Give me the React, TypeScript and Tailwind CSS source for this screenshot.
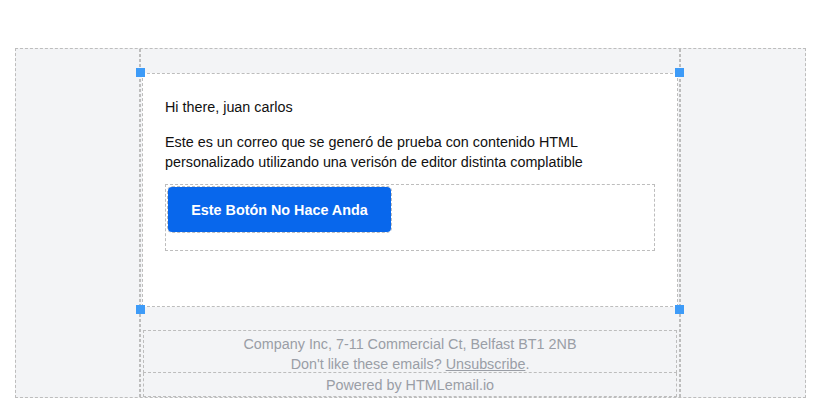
import React from "react";

const dash = "border-dashed border-[#bdbdbd]";

function Handle({ className }: { className: string }) {
  return <div className={`absolute w-[9px] h-[9px] bg-[#3d9bf8] z-10 ${className}`} />;
}

export default function App() {
  return (
    <div
      className="w-[820px] h-[412px] bg-white pt-[48px] pl-[15px] text-[14.35px] leading-[20px]"
      style={{ fontFamily: '"Liberation Sans", Arial, sans-serif' }}
    >
      <div className={`flex w-[791px] h-[350px] border ${dash} bg-[#f3f4f6]`}>
        {/* left column */}
        <div className={`w-[124px] border-r ${dash}`} />

        {/* main column */}
        <div className={`relative w-[540px] border-x ${dash} flex flex-col pt-[24px] px-[1px]`}>
          <Handle className="left-[-5px] top-[19px]" />
          <Handle className="right-[-5px] top-[19px]" />
          <Handle className="left-[-5px] top-[256px]" />
          <Handle className="right-[-5px] top-[256px]" />

          <div className={`bg-white border ${dash} h-[234px] px-[22px] pt-[23px] text-[#111]`}>
            <p className="mb-[15px]">Hi there, juan carlos</p>
            <p className="mb-[12px]">
              Este es un correo que se generó de prueba con contenido HTML
              <br />
              personalizado utilizando una verisón de editor distinta complatible
            </p>
            <div className={`border ${dash} h-[67px] p-[1px]`}>
              <div className={`inline-block border ${dash} rounded-[5px]`}>
                <div className="w-[223px] h-[45px] bg-[#0867ec] rounded-[4px] flex items-center justify-center text-white font-bold">
                  Este Botón No Hace Anda
                </div>
              </div>
            </div>
          </div>

          <div className="mt-[23px] mx-[1px] text-center text-[#9a9ea6]">
            <div className={`border ${dash} border-[#b0b0b0] h-[43px] pt-[3px]`}>
              <p>Company Inc, 7-11 Commercial Ct, Belfast BT1 2NB</p>
              <p>
                Don't like these emails? <span className="underline">Unsubscribe</span>.
              </p>
            </div>
            <div className={`border-x border-b ${dash} border-[#b0b0b0] h-[24px] pt-[2px]`}>
              <p>Powered by HTMLemail.io</p>
            </div>
          </div>
        </div>

        {/* right column */}
        <div className={`flex-1 border-l ${dash}`} />
      </div>
    </div>
  );
}
